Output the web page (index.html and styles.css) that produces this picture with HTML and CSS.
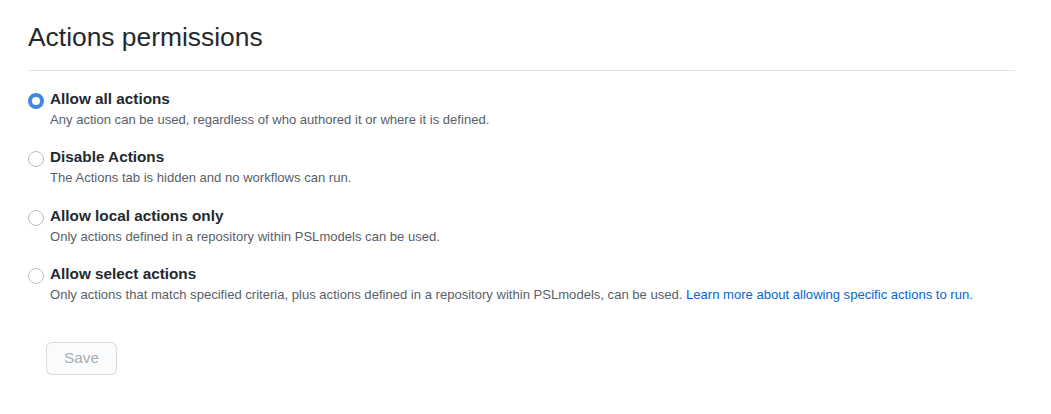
FILE: index.html
```html
<!DOCTYPE html>
<html>
<head>
<meta charset="utf-8">
<link rel="stylesheet" href="styles.css">
</head>
<body>
<div class="page">
  <div class="subhead">
    <h2 class="subhead-heading">Actions permissions</h2>
  </div>
  <form class="form">
    <div class="option">
      <input type="radio" name="perm" class="radio" checked>
      <div class="option-body">
        <label class="option-label">Allow all actions</label>
        <p class="note">Any action can be used, regardless of who authored it or where it is defined.</p>
      </div>
    </div>
    <div class="option">
      <input type="radio" name="perm" class="radio">
      <div class="option-body">
        <label class="option-label">Disable Actions</label>
        <p class="note">The Actions tab is hidden and no workflows can run.</p>
      </div>
    </div>
    <div class="option">
      <input type="radio" name="perm" class="radio">
      <div class="option-body">
        <label class="option-label">Allow local actions only</label>
        <p class="note">Only actions defined in a repository within PSLmodels can be used.</p>
      </div>
    </div>
    <div class="option">
      <input type="radio" name="perm" class="radio">
      <div class="option-body">
        <label class="option-label">Allow select actions</label>
        <p class="note">Only actions that match specified criteria, plus actions defined in a repository within PSLmodels, can be used. <a class="link" href="#">Learn more about allowing specific actions to run.</a></p>
      </div>
    </div>
    <div class="actions">
      <button type="button" class="btn" disabled>Save</button>
    </div>
  </form>
</div>
</body>
</html>
```
FILE: styles.css
```css
* { box-sizing: border-box; }
html, body { margin: 0; background: #fff; }
body {
  font-family: "Liberation Sans", Arial, sans-serif;
  font-size: 15.4px;
  line-height: 1.5;
  color: #24292e;
}
.page {
  padding: 18px 36px 0 28px;
}
.subhead {
  border-bottom: 1px solid #e1e4e8;
  padding-bottom: 12.4px;
  margin-bottom: 17px;
}
.subhead-heading {
  margin: 0;
  font-size: 26.4px;
  font-weight: 400;
  line-height: 39.6px;
}
.option {
  display: flex;
  align-items: flex-start;
  margin-bottom: 16.5px;
}
.radio {
  -webkit-appearance: none;
  appearance: none;
  margin: 5px 6px 0 0;
  width: 16px;
  height: 16px;
  flex: none;
  border-radius: 50%;
  border: 1px solid #bdbdbd;
  background: #fff;
}
.radio:checked {
  border: 4.5px solid #4289e6;
}
.option-label {
  display: block;
  font-weight: 700;
  font-size: 15.3px;
  line-height: 22px;
}
.note {
  margin: 0;
  font-size: 13.07px;
  line-height: 20px;
  color: #586069;
}
.link { color: #0366d6; text-decoration: none; }
.actions {
  padding: 20px 0 0 18px;
}
.btn {
  font-family: inherit;
  font-size: 15.4px;
  line-height: 22px;
  padding: 4.5px 17px;
  border: 1px solid rgba(27,31,35,0.15);
  border-radius: 6px;
  background: #fafbfc;
  color: rgba(36,41,46,0.4);
}
```
